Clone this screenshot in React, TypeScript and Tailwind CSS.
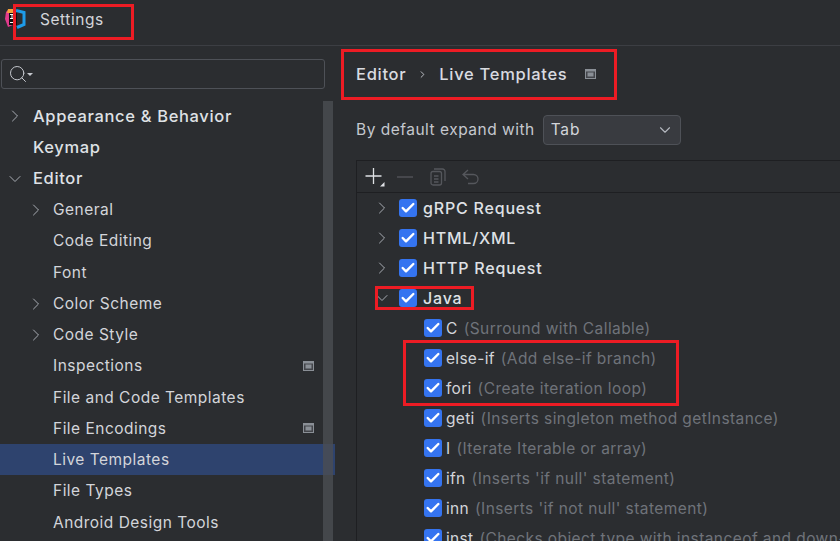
import React from "react";
import { ChevronRight, ChevronDown, Check, Search } from "lucide-react";

function ProjectMark() {
  return (
    <svg width="14" height="18" viewBox="0 0 14 18" className="block">
      <path d="M1 3 L4 0 H8 V16 L3 18 L0 10 Z" fill="#e13a8c" />
      <path d="M3 0 H8 V4 H2 Z" fill="#f7a13a" />
      <rect x="4" y="4" width="8" height="12" fill="#111" />
      <rect x="5" y="5" width="4" height="1" fill="#fff" />
      <rect x="6.5" y="5" width="1" height="5" fill="#fff" />
      <rect x="5" y="9" width="4" height="1" fill="#fff" />
      <rect x="5" y="13" width="4" height="1" fill="#fff" />
    </svg>
  );
}

function Module() {
  return (
    <svg width="11" height="11" viewBox="0 0 11 11" className="block">
      <rect x="0.5" y="0.5" width="10" height="9" fill="#43454a" stroke="#8a8f96" />
      <rect x="0.5" y="0.5" width="10" height="2" fill="#8a8f96" />
      <rect x="2.5" y="3.5" width="6" height="4" fill="#8a8f96" />
    </svg>
  );
}

const sideRows: { t: string; lvl: 0 | 1; chev?: "r" | "d"; mod?: boolean; sel?: boolean }[] = [
  { t: "Appearance & Behavior", lvl: 0, chev: "r" },
  { t: "Keymap", lvl: 0 },
  { t: "Editor", lvl: 0, chev: "d" },
  { t: "General", lvl: 1, chev: "r" },
  { t: "Code Editing", lvl: 1 },
  { t: "Font", lvl: 1 },
  { t: "Color Scheme", lvl: 1, chev: "r" },
  { t: "Code Style", lvl: 1, chev: "r" },
  { t: "Inspections", lvl: 1, mod: true },
  { t: "File and Code Templates", lvl: 1 },
  { t: "File Encodings", lvl: 1, mod: true },
  { t: "Live Templates", lvl: 1, sel: true },
  { t: "File Types", lvl: 1 },
  { t: "Android Design Tools", lvl: 1 },
];

function SideRow({ r }: { r: (typeof sideRows)[number] }) {
  return (
    <div className={`flex h-[31.25px] shrink-0 items-center pr-[21px] ${r.sel ? "bg-[#2e436e]" : ""}`}>
      <div className={`flex shrink-0 items-center ${r.lvl === 0 ? "w-[33px] pl-[5px]" : "w-[53px] pl-[26px]"}`}>
        {r.chev === "r" && <ChevronRight size={20} strokeWidth={1.2} className="shrink-0 text-[#a8acb3]" />}
        {r.chev === "d" && <ChevronDown size={20} strokeWidth={1.2} className="shrink-0 text-[#a8acb3]" />}
      </div>
      <span
        className={
          r.lvl === 0
            ? "text-[16.5px] font-medium tracking-[0.65px] text-[#dfe1e5]"
            : "text-[15.5px] tracking-[0.48px] text-[#d3d5da]"
        }
      >
        {r.t}
      </span>
      {r.mod && (
        <span className="ml-auto">
          <Module />
        </span>
      )}
    </div>
  );
}

function Box() {
  return (
    <span className="flex h-[18px] w-[18px] shrink-0 items-center justify-center rounded-[3px] bg-[#3574f0]">
      <Check size={16} strokeWidth={3.6} className="text-white" />
    </span>
  );
}

const groups: { t: string; open?: boolean }[] = [
  { t: "gRPC Request" },
  { t: "HTML/XML" },
  { t: "HTTP Request" },
  { t: "Java", open: true },
];

const items: [string, string][] = [
  ["C", "(Surround with Callable)"],
  ["else-if", "(Add else-if branch)"],
  ["fori", "(Create iteration loop)"],
  ["geti", "(Inserts singleton method getInstance)"],
  ["I", "(Iterate Iterable or array)"],
  ["ifn", "(Inserts 'if null' statement)"],
  ["inn", "(Inserts 'if not null' statement)"],
  ["inst", "(Checks object type with instanceof and down-casts it)"],
];

export default function App() {
  return (
    <div
      className="relative flex h-[541px] w-[840px] flex-col overflow-hidden bg-[#2b2d30] text-[#dfe1e5]"
      style={{ fontFamily: "Inter, 'Noto Sans', sans-serif" }}
    >
      <header className="flex h-[46px] shrink-0 items-center border-b border-[#3c3e43] pb-[6px]">
        <div className="relative ml-[5px] h-[24px] w-[21px] shrink-0">
          <div className="absolute left-0 top-[1px]">
            <ProjectMark />
          </div>
          <svg width="10" height="20" viewBox="0 0 10 20" className="absolute left-[11px] top-[1px]">
            <path d="M0 1.5 L8 3.5 V15.5 L1 18.5" fill="none" stroke="#1e9be8" strokeWidth="3" />
          </svg>
        </div>
        <span className="ml-[14px] text-[15.5px] tracking-[0.55px] text-[#d3d5da]">Settings</span>
      </header>

      <div className="flex min-h-0 flex-1">
        <aside className="flex w-[335px] shrink-0 flex-col">
          <div className="mt-[13px] ml-[1px] flex h-[30px] w-[324px] shrink-0 items-center rounded-[3px] border border-[#4e5157] pl-[6px] text-[#c5c8ce]">
            <Search size={20} strokeWidth={1.2} />
            <span className="-ml-[1px] mt-[1px] h-0 w-0 border-x-[3px] border-t-[3px] border-x-transparent border-t-[#c5c8ce]" />
          </div>
          <div className="mt-[11.4px] flex flex-col">
            {sideRows.map((r) => (
              <SideRow key={r.t} r={r} />
            ))}
          </div>
        </aside>

        <main className="flex min-w-0 flex-1 flex-col pl-[21px]">
          <div className="mt-[15px] flex h-[26px] items-center text-[16.5px] font-medium tracking-[0.7px] text-[#d9dbe0]">
            <span>Editor</span>
            <ChevronRight size={11} strokeWidth={2} className="ml-[11px] mr-[11px] text-[#c5c8ce]" />
            <span>Live Templates</span>
            <span className="ml-[18px] mt-[1px]">
              <Module />
            </span>
          </div>
          <div className="mt-[28px] flex items-center">
            <span className="text-[15.5px] tracking-[0.5px] text-[#c5c8ce]">By default expand with</span>
            <div className="ml-[8px] flex h-[30px] w-[138px] items-center justify-between rounded-[4px] border border-[#4e5157] bg-[#393b40] pl-[7px] pr-[6px]">
              <span className="text-[15.5px] tracking-[0.8px] text-[#d3d5da]">Tab</span>
              <ChevronDown size={18} strokeWidth={1.5} className="text-[#b4b8bf]" />
            </div>
          </div>
          <div className="mt-[15px] flex min-h-0 flex-1 flex-col border-l border-t border-[#1e1f22]">
            <div className="flex h-[32px] shrink-0 items-center border-b border-[#1e1f22] pl-[8px]">
              <svg width="20" height="20" viewBox="0 0 20 20" fill="none" className="shrink-0">
                <path d="M8.5 1 V17 M0.5 9 H16.5" stroke="#dfe1e5" strokeWidth="1.3" />
                <path d="M19.5 15 V19.5 H15 Z" fill="#dfe1e5" />
              </svg>
              <svg width="16" height="2" viewBox="0 0 16 2" className="ml-[12px] shrink-0">
                <path d="M0 1 H16" stroke="#55575c" strokeWidth="1.3" />
              </svg>
              <svg width="16" height="18" viewBox="0 0 16 18" className="ml-[17px] shrink-0" fill="none" stroke="#55575c" strokeWidth="1.3">
                <rect x="1" y="3.5" width="10.5" height="13.5" rx="2" />
                <path d="M4 1 H12.5 A2.5 2.5 0 0 1 15 3.5 V13" />
                <path d="M4 8 H8.5 M4 11 H8.5 M4 14 H8.5" />
              </svg>
              <svg width="18" height="16" viewBox="0 0 18 16" className="ml-[16px] shrink-0" fill="none" stroke="#55575c" strokeWidth="1.3">
                <path d="M6 1 L1 5.5 L6 10 M1 5.5 H11.5 A4.5 4.5 0 0 1 11.5 14.5 H6" />
              </svg>
            </div>
            <div className="flex flex-col">
              {groups.map((g) => (
                <div key={g.t} className="flex h-[30px] shrink-0 items-center pl-[15px]">
                  {g.open ? (
                    <ChevronDown size={20} strokeWidth={1.2} className="text-[#a8acb3]" />
                  ) : (
                    <ChevronRight size={20} strokeWidth={1.2} className="text-[#a8acb3]" />
                  )}
                  <span className="ml-[7px]">
                    <Box />
                  </span>
                  <span className="ml-[6px] text-[16px] font-medium tracking-[0.8px] text-[#dfe1e5]">{g.t}</span>
                </div>
              ))}
              {items.map(([k, d]) => (
                <div key={k} className="flex h-[30px] shrink-0 items-center whitespace-nowrap pl-[67px]">
                  <Box />
                  <span className="ml-[4px] pt-[2px] text-[15.5px] tracking-[0.3px] text-[#d3d5da]">{k}</span>
                  <span className="ml-[6px] pt-[2px] text-[15.5px] tracking-[0.42px] text-[#6f737a]">{d}</span>
                </div>
              ))}
            </div>
          </div>
        </main>
      </div>

      <div className="absolute left-[323px] top-[101px] bottom-0 w-[10px] bg-[#4b4d52]/80" />

      <div className="absolute left-[13px] top-[4px] h-[36px] w-[121px] border-[3px] border-[#ed1c24]" />
      <div className="absolute left-[341px] top-[49px] h-[51px] w-[276px] border-[3px] border-[#ed1c24]" />
      <div className="absolute left-[375px] top-[286px] h-[24px] w-[99px] border-[3px] border-[#ed1c24]" />
      <div className="absolute left-[403px] top-[340px] h-[66px] w-[276px] border-[3px] border-[#ed1c24]" />
    </div>
  );
}
